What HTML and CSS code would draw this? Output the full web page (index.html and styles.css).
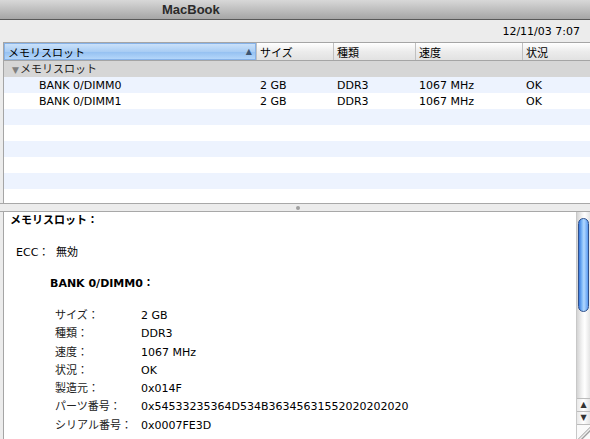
FILE: index.html
```html
<!DOCTYPE html>
<html lang="ja">
<head>
    <meta charset="UTF-8">
    <title>MacBook</title>
    <link rel="stylesheet" href="styles.css">
</head>
<body>

<div class="titlebar">MacBook</div>

<div class="toolbar">12/11/03 7:07</div>

<div class="table-wrap">
    <div class="thead">
        <div class="th selected">メモリスロット<span class="sort">▲</span></div>
        <div class="th">サイズ</div>
        <div class="th">種類</div>
        <div class="th">速度</div>
        <div class="th">状況</div>
    </div>
    <div class="group-row"><span class="tri">▼</span>メモリスロット</div>
    <div class="tr odd">
        <div class="td first">BANK 0/DIMM0</div>
        <div class="td">2 GB</div>
        <div class="td">DDR3</div>
        <div class="td">1067 MHz</div>
        <div class="td">OK</div>
    </div>
    <div class="tr">
        <div class="td first">BANK 0/DIMM1</div>
        <div class="td">2 GB</div>
        <div class="td">DDR3</div>
        <div class="td">1067 MHz</div>
        <div class="td">OK</div>
    </div>
    <div class="tr odd"></div>
    <div class="tr"></div>
    <div class="tr odd"></div>
    <div class="tr"></div>
    <div class="tr odd"></div>
    <div class="tr short"></div>
</div>

<div class="splitter"><span class="dimple"></span></div>

<div class="detail">
    <div class="detail-body">
        <div class="heading">メモリスロット：</div>
        <div class="ecc"><span class="ecc-label">ECC：</span>無効</div>
        <div class="bank">BANK 0/DIMM0：</div>
        <div class="props">
            <div class="prop"><span class="key">サイズ：</span><span>2 GB</span></div>
            <div class="prop"><span class="key">種類：</span><span>DDR3</span></div>
            <div class="prop"><span class="key">速度：</span><span>1067 MHz</span></div>
            <div class="prop"><span class="key">状況：</span><span>OK</span></div>
            <div class="prop"><span class="key">製造元：</span><span>0x014F</span></div>
            <div class="prop"><span class="key">パーツ番号：</span><span>0x54533235364D534B36345631552020202020</span></div>
            <div class="prop"><span class="key">シリアル番号：</span><span>0x0007FE3D</span></div>
        </div>
    </div>
    <div class="scrollbar">
        <div class="track">
            <div class="thumb"></div>
        </div>
        <div class="arrow up">▲</div>
        <div class="arrow down">▼</div>
        <div class="grip"></div>
    </div>
</div>

</body>
</html>
```

FILE: styles.css
```css
body {
    margin: 0;
    width: 590px;
    height: 439px;
    overflow: hidden;
    background-color: #ececec;
    font-family: "DejaVu Sans", "Noto Sans CJK JP", sans-serif;
    font-size: 11px;
    color: #000;
}
.titlebar {
    height: 19px;
    line-height: 19px;
    padding-left: 162px;
    font-family: "Liberation Sans", "Noto Sans CJK JP", sans-serif;
    font-size: 13px;
    font-weight: bold;
    color: #2a2a2a;
    background: linear-gradient(#d8d8d8, #a6a6a6);
    border-bottom: 1px solid #595959;
}
.toolbar {
    height: 22px;
    line-height: 24px;
    text-align: right;
    padding-right: 10px;
    font-size: 11px;
}
.table-wrap {
    margin-left: 3px;
    height: 160px;
    border-left: 1px solid #a5a5a5;
    border-top: 1px solid #a5a5a5;
    background-color: #fff;
    overflow: hidden;
}
.thead {
    display: grid;
    grid-template-columns: 252px 77px 82px 107px 1fr;
    height: 17px;
    border-bottom: 1px solid #a5a5a5;
}
.th {
    display: flex;
    align-items: center;
    padding-left: 3px;
    background: linear-gradient(#ffffff, #ececec 50%, #e2e2e2);
    border-left: 1px solid #c0c0c0;
    white-space: nowrap;
}
.th.selected {
    border-left: none;
    padding-left: 4px;
    padding-right: 4px;
    background: linear-gradient(#cfe4fa, #a9cdf4 50%, #94c0f1 52%, #b8d9fb);
    justify-content: space-between;
    box-shadow: inset 0 0 0 1px #86b2e8;
}
.sort {
    font-size: 8px;
    color: #3d5570;
}
.group-row {
    height: 16px;
    line-height: 18px;
    padding-left: 8px;
    background-color: #d6d6d6;
    font-size: 11px;
    color: #222;
}
.tri {
    font-size: 9px;
    color: #808080;
    margin-right: 1px;
}
.tr {
    display: grid;
    grid-template-columns: 252px 77px 82px 107px 1fr;
    height: 16px;
    line-height: 17px;
}
.tr.odd {
    background-color: #edf3fe;
}
.tr.short {
    height: 13px;
}
.td {
    padding-left: 4px;
    white-space: nowrap;
}
.td.first {
    padding-left: 35px;
}
.splitter {
    height: 7px;
    border-top: 1px solid #a8a8a8;
    border-bottom: 1px solid #a8a8a8;
    background-color: #ececec;
    display: flex;
    justify-content: center;
    align-items: center;
    padding-left: 6px;
}
.dimple {
    width: 4px;
    height: 4px;
    border-radius: 50%;
    background-color: #a0a0a0;
}
.detail {
    display: flex;
    margin-left: 3px;
    height: 227px;
    background-color: #fff;
    border-left: 1px solid #a5a5a5;
}
.detail-body {
    flex: 1;
    padding-left: 6px;
    padding-top: 1px;
    white-space: nowrap;
    overflow: hidden;
}
.heading {
    font-weight: bold;
    height: 16px;
    line-height: 16px;
}
.ecc {
    margin-top: 16px;
    padding-left: 6px;
    line-height: 16px;
}
.ecc-label {
    display: inline-block;
    width: 40px;
}
.bank {
    margin-top: 15px;
    padding-left: 40px;
    font-weight: bold;
    line-height: 16px;
}
.props {
    margin-top: 15px;
    padding-left: 45px;
}
.prop {
    height: 18.3px;
    line-height: 18px;
}
.key {
    display: inline-block;
    width: 86px;
    color: #222;
}
.scrollbar {
    width: 13px;
    display: flex;
    flex-direction: column;
    border-left: 1px solid #c8c8c8;
}
.track {
    flex: 1;
    padding: 6px 0 0 1px;
    background: linear-gradient(90deg, #d4d4d4, #f4f4f4 40%, #ffffff 60%, #e4e4e4);
}
.thumb {
    width: 11px;
    height: 94px;
    border-radius: 6px;
    box-sizing: border-box;
    border: 1px solid #2f4f8a;
    background: linear-gradient(90deg, #3a7be0, #84bdf8 35%, #b2d8ff 55%, #5a9bf0);
}
.arrow {
    height: 12px;
    line-height: 12px;
    font-size: 8px;
    text-align: center;
    color: #333;
    background: linear-gradient(90deg, #e8e8e8, #ffffff 50%, #e4e4e4);
    border-top: 1px solid #bcbcbc;
}
.grip {
    height: 14px;
    border-top: 1px solid #bcbcbc;
    background: linear-gradient(135deg, #fafafa 55%, #9a9a9a 56%, #fafafa 62%, #9a9a9a 70%, #fafafa 76%);
}
```
